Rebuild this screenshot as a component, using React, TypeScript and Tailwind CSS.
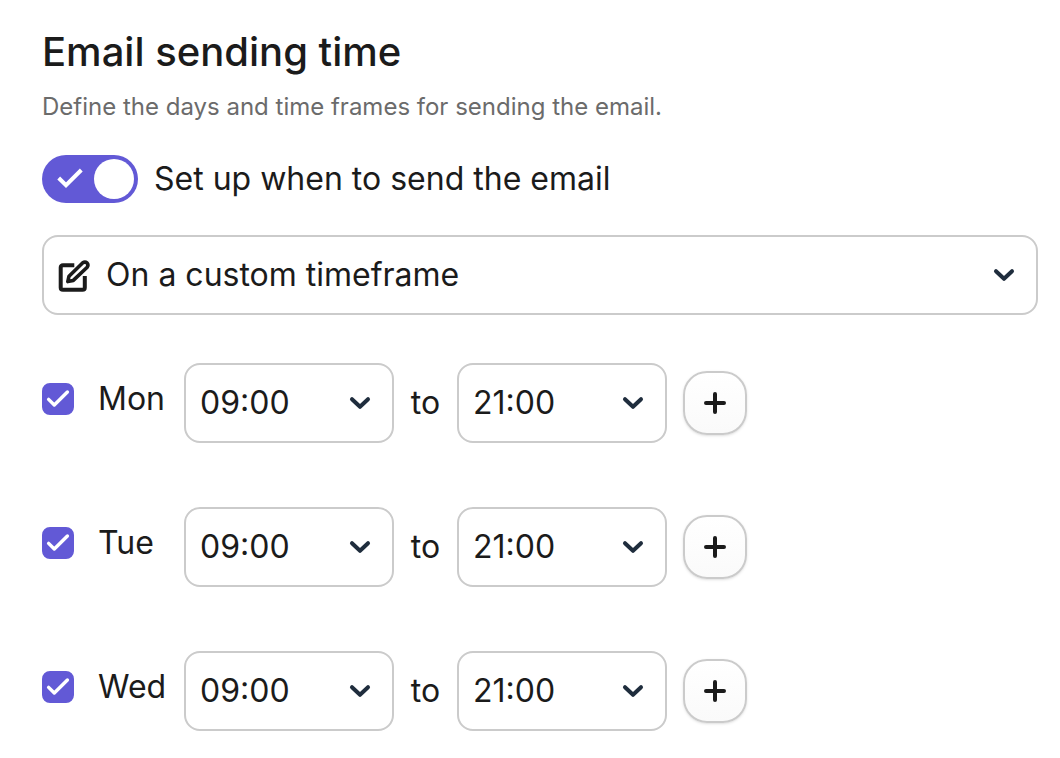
import React, { useState } from "react";

const HOURS = Array.from({ length: 24 }, (_, i) => `${String(i).padStart(2, "0")}:00`);
const DAYS = ["Mon", "Tue", "Wed"];

const Chevron: React.FC = () => (
  <svg
    className="pointer-events-none col-start-1 row-start-1 mr-[22px] h-6 w-6 self-center justify-self-end text-[#1f2d3d]"
    fill="none"
    stroke="currentColor"
    strokeWidth="4"
    strokeLinecap="round"
    strokeLinejoin="round"
    viewBox="0 0 24 24"
  >
    <path d="M4 8.2L12 15.8L20 8.2" />
  </svg>
);

const EditIcon: React.FC = () => (
  <svg
    className="pointer-events-none col-start-1 row-start-1 ml-4 h-8 w-8 self-center overflow-visible text-[#1b1b1b]"
    fill="none"
    stroke="currentColor"
    strokeLinejoin="round"
    viewBox="0 0 32 32"
  >
    <path
      strokeWidth="4"
      d="M16.3 6.3H5Q2.7 6.3 2.7 8.6V28.4Q2.7 30.7 5 30.7H24.5Q26.8 30.7 26.8 28.4V17"
    />
    <path
      strokeWidth="3.6"
      d="M9.8 22.6L11 17.2L24.8 3.8Q27 2.2 29 3.9Q30.8 6 29.2 8.2L15.3 21.4Z"
    />
  </svg>
);

const TimeSelect: React.FC<{ label: string; initial: string }> = ({ label, initial }) => (
  <div className="grid w-[210px]">
    <select
      aria-label={label}
      defaultValue={initial}
      className="col-start-1 row-start-1 h-20 appearance-none rounded-2xl border-2 border-[#cbcbcb] bg-white pl-[14px] pr-12"
    >
      {HOURS.map((hour) => (
        <option key={hour}>{hour}</option>
      ))}
    </select>
    <Chevron />
  </div>
);

const DayRow: React.FC<{ day: string }> = ({ day }) => (
  <div className="flex items-center gap-4">
    <label className="flex w-[126px] items-center gap-6 pb-2">
      <span className="grid">
        <input
          type="checkbox"
          defaultChecked
          className="peer col-start-1 row-start-1 h-8 w-8 appearance-none rounded-lg border-2 border-[#cbcbcb] checked:border-[#6259d6] checked:bg-[#6259d6]"
        />
        <svg
          className="pointer-events-none invisible col-start-1 row-start-1 h-8 w-8 text-white peer-checked:visible"
          fill="none"
          stroke="currentColor"
          strokeWidth="3.4"
          strokeLinecap="round"
          strokeLinejoin="round"
          viewBox="0 0 32 32"
        >
          <path d="M6.6 16.4L12.3 22L25.4 9" />
        </svg>
      </span>
      {day}
    </label>
    <TimeSelect label={`${day} from`} initial="09:00" />
    <span className="w-[31px] text-center">to</span>
    <TimeSelect label={`${day} until`} initial="21:00" />
    <button
      type="button"
      aria-label={`Add time frame for ${day}`}
      className="flex h-16 w-16 items-center justify-center rounded-3xl border-2 border-[#cbcbcb] bg-gradient-to-b from-white to-[#fafafa] shadow-sm"
    >
      <svg
        className="h-6 w-6"
        fill="none"
        stroke="currentColor"
        strokeWidth="4"
        strokeLinecap="round"
        viewBox="0 0 24 24"
      >
        <path d="M12 3V21M3 12H21" />
      </svg>
    </button>
  </div>
);

const App: React.FC = () => {
  const [enabled, setEnabled] = useState(true);

  return (
    <main className="bg-white pt-6 pr-[22px] pb-7 pl-[42px] font-['Inter',sans-serif] text-[32px] leading-10 text-[#1b1b1b]">
      {/* Heading */}
      <h1 className="text-[40px] leading-14 font-medium">Email sending time</h1>
      <p className="mt-2 text-2xl leading-[38px] text-[#6b6b6b]">
        Define the days and time frames for sending the email.
      </p>

      {/* Toggle */}
      <label className="mt-[29px] flex items-center gap-4">
        <span className="grid">
          <input
            type="checkbox"
            role="switch"
            checked={enabled}
            onChange={(e) => setEnabled(e.target.checked)}
            className="peer col-start-1 row-start-1 h-12 w-24 appearance-none rounded-full bg-gray-300 checked:bg-[#6259d6]"
          />
          <svg
            className="pointer-events-none col-start-1 row-start-1 h-12 w-24 text-white"
            fill="none"
            viewBox="0 0 96 48"
          >
            {enabled && <path d="M16.7 23L24 30.2L39.3 15" stroke="currentColor" strokeWidth="4" />}
            <circle cx={enabled ? 72 : 24} cy="24" r="20" fill="currentColor" />
          </svg>
        </span>
        Set up when to send the email
      </label>

      {/* Timeframe */}
      <div className="mt-8 grid">
        <select
          aria-label="Sending timeframe"
          className="col-start-1 row-start-1 h-20 w-full appearance-none rounded-2xl border-2 border-[#cbcbcb] bg-white pr-16 pl-[62px]"
        >
          <option>On a custom timeframe</option>
        </select>
        <EditIcon />
        <Chevron />
      </div>

      {/* Days */}
      <div className="mt-12 flex flex-col gap-16">
        {DAYS.map((day) => (
          <DayRow key={day} day={day} />
        ))}
      </div>
    </main>
  );
};

export default App;
